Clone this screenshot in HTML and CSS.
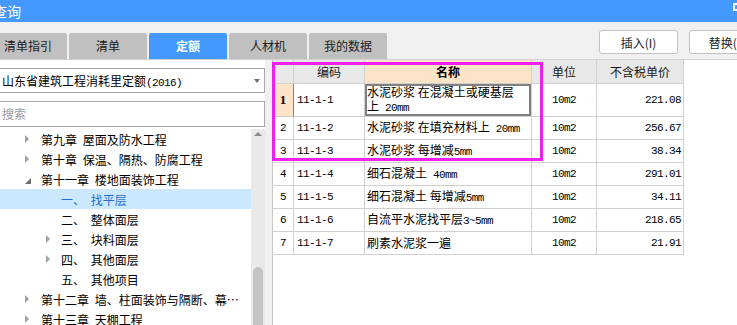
FILE: index.html
```html
<!DOCTYPE html>
<html lang="zh-CN">
<head>
<meta charset="utf-8">
<title>查询</title>
<link rel="stylesheet" href="styles.css">
</head>
<body>
<div class="app">
  <header class="titlebar">
    <span class="title">查询</span>
    <span class="winbtn"></span>
  </header>
  <div class="toolbar">
    <div class="tabs">
      <div class="tab">清单指引</div>
      <div class="tab">清单</div>
      <div class="tab active">定额</div>
      <div class="tab">人材机</div>
      <div class="tab">我的数据</div>
    </div>
    <div class="actions">
      <button class="btn">插入(I)</button>
      <button class="btn">替换(R)</button>
    </div>
  </div>
  <div class="main">
    <aside class="left">
      <div class="select"><span>山东省建筑工程消耗里定额<span class="m">(2016)</span></span><span class="caret"></span></div>
      <div class="search">搜索</div>
      <div class="treebox">
        <ul class="tree">
          <li class="row l1"><span class="tw"><i class="closed"></i></span><span class="lbl">第九章 屋面及防水工程</span></li>
          <li class="row l1"><span class="tw"><i class="closed"></i></span><span class="lbl">第十章 保温、隔热、防腐工程</span></li>
          <li class="row l1"><span class="tw"><i class="open"></i></span><span class="lbl">第十一章 楼地面装饰工程</span></li>
          <li class="row l2 selected"><span class="tw"></span><span class="lbl">一、 找平层</span></li>
          <li class="row l2"><span class="tw"></span><span class="lbl">二、 整体面层</span></li>
          <li class="row l2"><span class="tw"><i class="closed"></i></span><span class="lbl">三、 块料面层</span></li>
          <li class="row l2"><span class="tw"><i class="closed"></i></span><span class="lbl">四、 其他面层</span></li>
          <li class="row l2"><span class="tw"></span><span class="lbl">五、 其他项目</span></li>
          <li class="row l1"><span class="tw"><i class="closed"></i></span><span class="lbl">第十二章 墙、柱面装饰与隔断、幕墙工程</span></li>
          <li class="row l1"><span class="tw"><i class="closed"></i></span><span class="lbl">第十三章 天棚工程</span></li>
        </ul>
        <div class="vscroll"><span class="up"></span><span class="thumb"></span></div>
      </div>
    </aside>
    <section class="right">
      <table class="grid">
        <colgroup><col class="c0"><col class="c1"><col class="c2"><col class="c3"><col class="c4"></colgroup>
        <thead>
          <tr><th></th><th>编码</th><th class="hsel">名称</th><th>单位</th><th>不含税单价</th></tr>
        </thead>
        <tbody>
          <tr class="tall"><td class="no cur">1</td><td class="code m">11-1-1</td><td class="name focus">水泥砂浆 在混凝土或硬基层<br>上<span class="m"> 20mm</span></td><td class="unit m">10m2</td><td class="price m">221.08</td></tr>
          <tr><td class="no m">2</td><td class="code m">11-1-2</td><td class="name">水泥砂浆 在填充材料上<span class="m"> 20mm</span></td><td class="unit m">10m2</td><td class="price m">256.67</td></tr>
          <tr><td class="no m">3</td><td class="code m">11-1-3</td><td class="name">水泥砂浆 每增减<span class="m">5mm</span></td><td class="unit m">10m2</td><td class="price m">38.34</td></tr>
          <tr><td class="no m">4</td><td class="code m">11-1-4</td><td class="name">细石混凝土<span class="m"> 40mm</span></td><td class="unit m">10m2</td><td class="price m">291.01</td></tr>
          <tr><td class="no m">5</td><td class="code m">11-1-5</td><td class="name">细石混凝土 每增减<span class="m">5mm</span></td><td class="unit m">10m2</td><td class="price m">34.11</td></tr>
          <tr><td class="no m">6</td><td class="code m">11-1-6</td><td class="name">自流平水泥找平层<span class="m">3~5mm</span></td><td class="unit m">10m2</td><td class="price m">218.65</td></tr>
          <tr><td class="no m">7</td><td class="code m">11-1-7</td><td class="name">刷素水泥浆一遍</td><td class="unit m">10m2</td><td class="price m">21.91</td></tr>
        </tbody>
      </table>
      <div class="mark"></div>
    </section>
  </div>
</div>
</body>
</html>
```

FILE: styles.css
```css
* { box-sizing: border-box; margin: 0; padding: 0; }
html, body { width: 737px; height: 325px; overflow: hidden; }
body {
  background: #f0f0f0;
  font-family: "Noto Sans CJK SC", "Noto Sans", sans-serif;
  font-size: 12px;
  color: #000;
}
.app { display: flex; flex-direction: column; height: 325px; }

.titlebar {
  height: 22px;
  flex-shrink: 0;
  background: #4399ff;
  color: #fff;
  display: flex;
  align-items: flex-start;
  overflow: hidden;
}
.title { font-size: 14px; line-height: 22px; margin-left: -7px; }
.winbtn {
  margin-left: auto;
  margin-top: 3px;
  margin-right: -6px;
  width: 10px;
  height: 8px;
  border: 2px solid #fff;
}

.toolbar {
  height: 38px;
  flex-shrink: 0;
  display: flex;
  border-bottom: 1px solid #d2d2d2;
  overflow: hidden;
}
.tabs {
  display: flex;
  gap: 2px;
  margin-left: -11px;
  align-self: flex-end;
  flex-shrink: 0;
}
.tab {
  width: 78px;
  height: 26px;
  line-height: 26px;
  text-align: center;
  background: #c0c0c0;
  color: #1c1c1c;
  border-radius: 2px 2px 0 0;
}
.tab.active { background: #4399ff; color: #fff; font-weight: bold; }

.actions {
  display: flex;
  gap: 11px;
  margin-left: 212px;
  margin-top: 8px;
  flex-shrink: 0;
  align-self: flex-start;
}
.btn {
  flex-shrink: 0;
  width: 79px;
  height: 24px;
  border: 1px solid #c2c2c2;
  border-radius: 3px;
  background: #fff;
  font-family: inherit;
  font-size: 12px;
  color: #222;
}

.main { flex: 1; display: flex; gap: 7px; min-height: 0; }

.left {
  width: 265px;
  flex-shrink: 0;
  background: #fff;
  display: flex;
  flex-direction: column;
  padding-top: 8px;
}
.select {
  margin-left: -2px;
  width: 267px;
  height: 25px;
  border: 1px solid #a8a8a8;
  display: flex;
  align-items: center;
  padding-left: 3px;
  white-space: nowrap;
}
.caret {
  margin-left: auto;
  margin-right: 4px;
  width: 0;
  height: 0;
  border-left: 3px solid transparent;
  border-right: 3px solid transparent;
  border-top: 4px solid #707070;
}
.search {
  margin-top: 8px;
  margin-left: -2px;
  width: 267px;
  height: 26px;
  border: 1px solid #a8a8a8;
  padding-left: 3px;
  line-height: 24px;
  color: #9a9a9a;
}

.treebox { margin-top: 2px; flex: 1; display: flex; min-height: 0; }
.tree { list-style: none; width: 251px; flex-shrink: 0; word-spacing: 3px; }
.row { height: 20px; display: flex; align-items: center; white-space: nowrap; }
.l1 { padding-left: 25px; }
.l2 { padding-left: 46px; }
.l1 .tw { width: 16px; }
.l2 .tw { width: 15px; }
.tw { display: flex; align-items: center; height: 20px; flex-shrink: 0; }
.closed {
  width: 0; height: 0;
  border-left: 4px solid #a0a0a0;
  border-top: 4px solid transparent;
  border-bottom: 4px solid transparent;
}
.open {
  width: 0; height: 0;
  margin-top: 3px;
  border-bottom: 6px solid #6a6a6a;
  border-left: 6px solid transparent;
}
.lbl {
  flex: 1;
  min-width: 0;
  overflow: hidden;
  text-overflow: ellipsis;
  margin-right: 12px;
}
.selected { background: #cce8ff; color: #1f6fd6; }

.vscroll {
  width: 14px;
  background: #e9e9e9;
  display: flex;
  flex-direction: column;
  overflow: hidden;
}
.up {
  align-self: center;
  margin-top: 3px;
  width: 0; height: 0;
  border-left: 4px solid transparent;
  border-right: 4px solid transparent;
  border-bottom: 4px solid #8a8a8a;
}
.thumb {
  margin-top: auto;
  margin-left: 2px;
  width: 10px;
  height: 58px;
  flex-shrink: 0;
  background: #c4c4c4;
  border-radius: 5px 5px 0 0;
}

.right {
  flex: 1;
  background: #fff;
  border-left: 1px solid #c8c8c8;
  position: relative;
}

.m {
  font-family: "Liberation Mono", "DejaVu Sans Mono", monospace;
  font-size: 11px;
  letter-spacing: -0.6px;
}

.grid {
  table-layout: fixed;
  width: 411px;
  border-collapse: separate;
  border-spacing: 0;
}
.c0 { width: 21px; }
.c1 { width: 71px; }
.c2 { width: 167px; }
.c3 { width: 65px; }
.c4 { width: 87px; }
.grid th, .grid td {
  box-sizing: border-box;
  border-right: 1px solid #d0d0d0;
  border-bottom: 1px solid #d0d0d0;
  padding: 0;
  line-height: 14px;
  white-space: nowrap;
  overflow: hidden;
}
.grid th {
  height: 24px;
  background: #e8e8e8;
  font-weight: normal;
  color: #1a1a1a;
  text-align: center;
}
.grid th.hsel { background: #fde4c8; font-weight: bold; color: #000; }
.grid td { height: 23px; }
.grid tr.tall td { height: 33px; }
.no { text-align: center; }
.no.cur {
  background: #fde4c8;
  font-family: "Liberation Serif", serif;
  font-weight: bold;
  font-size: 13px;
  border-right-color: #3f8ee8;
}
.code { padding-left: 3px !important; }
.name { padding-left: 2px !important; }
.unit { text-align: center; }
.price { text-align: right; padding-right: 2px !important; }
.focus { box-shadow: inset 0 0 0 2px #808080; }

.mark {
  position: absolute;
  left: -1px;
  top: 2px;
  width: 271px;
  height: 99px;
  border: 3px solid #f020f0;
  pointer-events: none;
}
```
